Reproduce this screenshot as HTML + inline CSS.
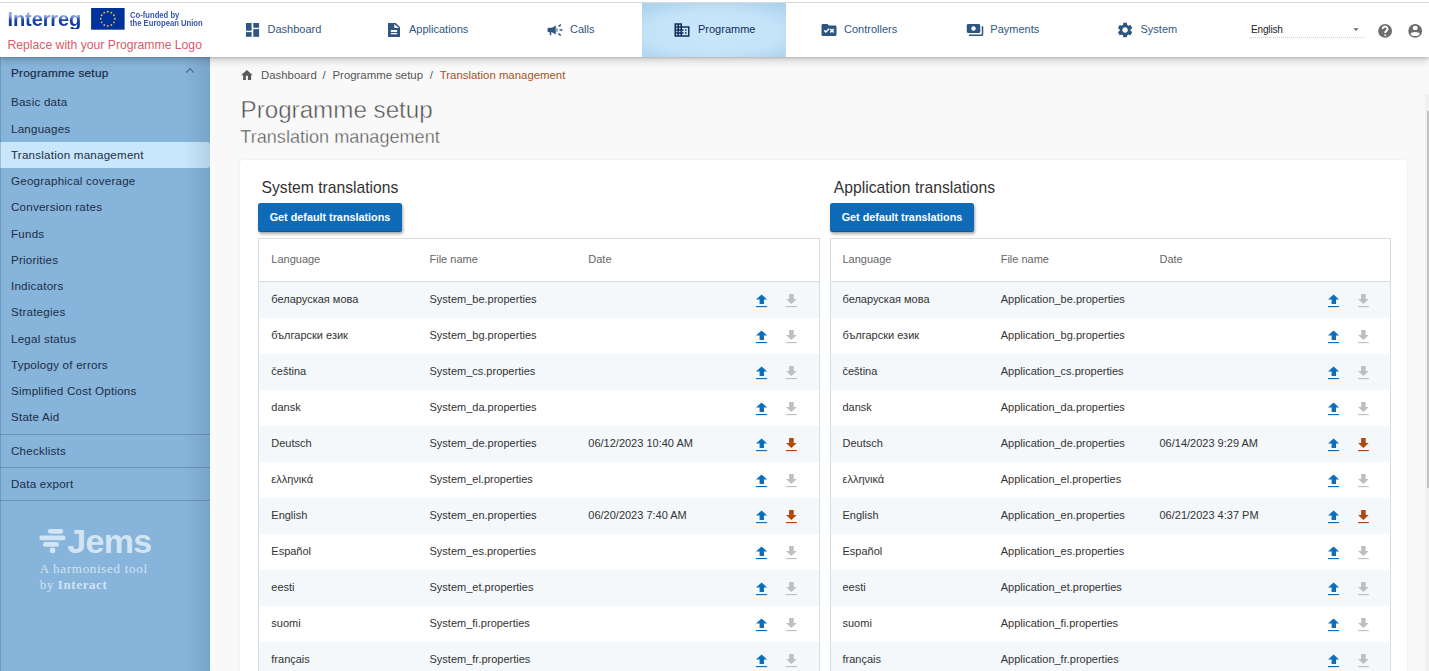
<!DOCTYPE html>
<html><head><meta charset="utf-8"><title>Jems - Translation management</title>
<style>
*{box-sizing:border-box;margin:0;padding:0}
html,body{width:1429px;height:671px;overflow:hidden;background:#f9f9f9;font-family:"Liberation Sans",sans-serif}
.a{position:absolute}
.t{position:absolute;line-height:1;white-space:nowrap}
#hdr{position:absolute;left:0;top:0;width:1429px;height:57px;background:#fff;z-index:5;box-shadow:0 3px 8px rgba(0,0,0,.2),0 1px 2px rgba(0,0,0,.15)}
.nav{color:#2f5680}
#side{position:absolute;left:0;top:0;width:210px;height:671px;background:#86b4da;z-index:2;overflow:hidden}
.s{color:#1e2d45}
#main{position:absolute;left:0;top:0;width:1429px;height:671px;z-index:1}
.bc{color:#555}
.ct{color:#333}
.btn{position:absolute;width:144px;height:28.6px;background:#0f6bb8;border-radius:2.5px;box-shadow:inset 0 -1px 0 rgba(0,0,0,.15),1px 2px 3px rgba(0,0,0,.35)}
.btnt{font-weight:bold;color:#fff}
.th{color:#666}
.td{color:#333}
</style></head><body>
<div id="hdr">
<div class="a" style="left:0;top:2px;width:1429px;height:1px;background:#d9dadc"></div>
<div class="t" style="left:7.50px;top:9px;font-size:20.00px;font-weight:bold;letter-spacing:-.1px;color:transparent;background:linear-gradient(to bottom,#a9b9e6 0px,#8da3dd 7px,#1d43a6 11px,#002f99 20px);-webkit-background-clip:text;background-clip:text">Interreg</div>
<svg class="a" style="left:91px;top:8px" width="34" height="22" viewBox="91 8 34 22" ><rect x="91.1" y="8" width="33.5" height="21.7" fill="#003399"/><g fill="#e3bb33"><circle cx="114.90" cy="18.80" r=".95"/><circle cx="113.95" cy="22.35" r=".95"/><circle cx="111.35" cy="24.95" r=".95"/><circle cx="107.80" cy="25.90" r=".95"/><circle cx="104.25" cy="24.95" r=".95"/><circle cx="101.65" cy="22.35" r=".95"/><circle cx="100.70" cy="18.80" r=".95"/><circle cx="101.65" cy="15.25" r=".95"/><circle cx="104.25" cy="12.65" r=".95"/><circle cx="107.80" cy="11.70" r=".95"/><circle cx="111.35" cy="12.65" r=".95"/><circle cx="113.95" cy="15.25" r=".95"/></g></svg>
<div class="t" style="left:129.60px;top:11px;font-size:8.80px;font-weight:bold;color:#3556a8;transform-origin:0 0;transform:scaleX(.87)">Co-funded by</div>
<div class="t" style="left:129.60px;top:19px;font-size:8.80px;font-weight:bold;color:#3556a8;transform-origin:0 0;transform:scaleX(.87)">the European Union</div>
<div class="t" style="left:7.50px;top:39px;font-size:12.20px;color:#dc5a6b">Replace with your Programme Logo</div>
<div class="a" style="left:642px;top:3px;width:144px;height:54px;background:radial-gradient(ellipse 80% 70% at 50% 55%,#c9e7fa 0%,#c4e3f8 55%,#a9d0ec 100%)"></div>
<svg class="a" style="left:244px;top:21px" width="18" height="18" viewBox="244 21 18 18" ><g fill="#2f5680"><rect x="246" y="23" width="5.6" height="7.7"/><rect x="253.3" y="23" width="5.8" height="4.75"/><rect x="246" y="32.1" width="5.6" height="4.7"/><rect x="253.3" y="29.1" width="5.8" height="7.7"/></g></svg>
<div class="t nav" style="left:267.50px;top:24px;font-size:11.00px;">Dashboard</div>
<svg class="a" style="left:386px;top:21px" width="16" height="18" viewBox="386 21 16 18" ><path fill="#2f5680" fill-rule="evenodd" d="M388 23H395.8L400 27.2V37H388Z M394.3 23.9V28H398.9Z M390.9 30H397.1V31.9H390.9Z M390.9 33H397.1V34.3H390.9Z"/></svg>
<div class="t nav" style="left:409.00px;top:24px;font-size:11.00px;">Applications</div>
<svg class="a" style="left:546px;top:21px" width="18" height="18" viewBox="0 0 24 24" fill="#2f5680"><path d="M18 11v2h4v-2h-4zm-2 6.61c.96.71 2.21 1.65 3.2 2.39.4-.53.8-1.07 1.2-1.6-.99-.74-2.24-1.68-3.2-2.4-.4.54-.8 1.08-1.2 1.61zM20.4 5.6c-.4-.53-.8-1.07-1.2-1.6-.99.74-2.24 1.68-3.2 2.4.4.53.8 1.07 1.2 1.6.96-.72 2.21-1.65 3.2-2.4zM4 9c-1.1 0-2 .9-2 2v2c0 1.1.9 2 2 2h1v4h2v-4h1l5 3V6L8 9H4zm11.5 3c0-1.33-.58-2.53-1.5-3.35v6.69c.92-.81 1.5-2.01 1.5-3.34z"/></svg>
<div class="t nav" style="left:570.00px;top:24px;font-size:11.00px;">Calls</div>
<svg class="a" style="left:673.3px;top:21px" width="18" height="18" viewBox="0 0 24 24" fill="#0f2d5c"><path d="M12 7V3H2v18h20V7H12zM6 19H4v-2h2v2zm0-4H4v-2h2v2zm0-4H4V9h2v2zm0-4H4V5h2v2zm4 12H8v-2h2v2zm0-4H8v-2h2v2zm0-4H8V9h2v2zm0-4H8V5h2v2zm10 12h-8v-2h2v-2h-2v-2h2v-2h-2V9h8v10zm-2-8h-2v2h2v-2zm0 4h-2v2h2v-2z"/></svg>
<div class="t nav" style="left:698.00px;top:24px;font-size:11.00px;color:#0f2d5c">Programme</div>
<svg class="a" style="left:820px;top:21px" width="18" height="18" viewBox="0 0 24 24" fill="#2f5680"><path d="M20 6h-8l-2-2H4c-1.1 0-2 .9-2 2v12c0 1.1.9 2 2 2h16c1.1 0 2-.9 2-2V8c0-1.1-.9-2-2-2zM7.83 16L5 13.17l1.41-1.41 1.41 1.41 3.54-3.54 1.41 1.41L7.83 16zm9.58-3L19 14.59 17.59 16 16 14.41 14.41 16 13 14.59 14.59 13 13 11.41 14.41 10 16 11.59 17.59 10 19 11.41 17.41 13z"/></svg>
<div class="t nav" style="left:844.00px;top:24px;font-size:11.00px;">Controllers</div>
<svg class="a" style="left:966px;top:21px" width="18" height="18" viewBox="0 0 24 24" fill="#2f5680"><path d="M19 14V6c0-1.1-.9-2-2-2H3c-1.1 0-2 .9-2 2v8c0 1.1.9 2 2 2h14c1.1 0 2-.9 2-2zm-9-1c-1.66 0-3-1.34-3-3s1.34-3 3-3 3 1.34 3 3-1.34 3-3 3zm13-6v11c0 1.1-.9 2-2 2H4v-2h17V7h2z"/></svg>
<div class="t nav" style="left:990.30px;top:24px;font-size:11.00px;">Payments</div>
<svg class="a" style="left:1115.5px;top:20.9px" width="18.2" height="18.2" viewBox="0 0 24 24" fill="#2f5680"><path d="M19.14 12.94c.04-.3.06-.61.06-.94 0-.32-.02-.64-.07-.94l2.03-1.58c.18-.14.23-.41.12-.61l-1.92-3.32c-.12-.22-.37-.29-.59-.22l-2.39.96c-.5-.38-1.03-.7-1.62-.94l-.36-2.54c-.04-.24-.24-.41-.48-.41h-3.84c-.24 0-.43.17-.47.41l-.36 2.54c-.59.24-1.13.57-1.62.94l-2.39-.96c-.22-.08-.47 0-.59.22L2.74 8.87c-.12.21-.08.47.12.61l2.03 1.58c-.05.3-.09.63-.09.94s.02.64.07.94l-2.03 1.58c-.18.14-.23.41-.12.61l1.92 3.32c.12.22.37.29.59.22l2.39-.96c.5.38 1.03.7 1.62.94l.36 2.54c.05.24.24.41.48.41h3.84c.24 0 .44-.17.47-.41l.36-2.54c.59-.24 1.13-.56 1.62-.94l2.39.96c.22.08.47 0 .59-.22l1.92-3.32c.12-.22.07-.47-.12-.61l-2.01-1.58zM12 15.6c-1.98 0-3.6-1.62-3.6-3.6s1.62-3.6 3.6-3.6 3.6 1.62 3.6 3.6-1.62 3.6-3.6 3.6z"/></svg>
<div class="t nav" style="left:1140.50px;top:24px;font-size:11.00px;">System</div>
<div class="t" style="left:1251.00px;top:25px;font-size:10.00px;color:#222;letter-spacing:-.15px">English</div>
<svg class="a" style="left:1352px;top:27px" width="8" height="5" viewBox="1352 27 8 5" ><path d="M1353.2 28.2h5.6l-2.8 2.8z" fill="#6b6b6b"/></svg>
<div class="a" style="left:1249.5px;top:37px;width:114px;height:1px;border-top:1px dotted #cfcfcf"></div>
<svg class="a" style="left:1376px;top:22px" width="18" height="18" viewBox="1376 22 18 18" ><circle cx="1385.1" cy="30.9" r="6.9" fill="#6e6e6e"/><path d="M1382.7 29.0a2.4 2.4 0 1 1 3.7 1.9c-.8.5-1.2.9-1.2 1.9v.3" fill="none" stroke="#fff" stroke-width="1.9"/><rect x="1384.3" y="34.5" width="1.8" height="1.4" fill="#fff"/></svg>
<svg class="a" style="left:1406px;top:22px" width="18" height="18" viewBox="1406 22 18 18" ><circle cx="1415.2" cy="30.9" r="6.9" fill="#6e6e6e"/><ellipse cx="1415.2" cy="27.9" rx="2.5" ry="2.2" fill="#fff"/><path d="M1410.6 34.2c0-1.4 2-2.3 4.6-2.3s4.6.9 4.6 2.3c-1.1 1.2-2.7 1.9-4.6 1.9s-3.5-.7-4.6-1.9z" fill="#fff"/></svg>
</div>
<div id="side">
<div class="a" style="left:0;top:142px;width:210px;height:26px;background:#c9e7fa;border-radius:0 3px 3px 0"></div>
<div class="t s" style="left:11.00px;top:68px;font-size:11.80px;color:#1b2a44;-webkit-text-stroke:.2px #1b2a44;letter-spacing:.25px">Programme setup</div>
<svg class="a" style="left:184px;top:66px" width="12" height="9" viewBox="184 66 12 9" ><path d="M186.2 72.6L190 68.6 193.8 72.6" fill="none" stroke="#4d6680" stroke-width="1.1"/></svg>
<div class="t s" style="left:11.00px;top:96px;font-size:11.60px;letter-spacing:.22px">Basic data</div>
<div class="t s" style="left:11.00px;top:123px;font-size:11.60px;letter-spacing:.22px">Languages</div>
<div class="t s" style="left:11.00px;top:149px;font-size:11.60px;letter-spacing:.22px">Translation management</div>
<div class="t s" style="left:11.00px;top:175px;font-size:11.60px;letter-spacing:.22px">Geographical coverage</div>
<div class="t s" style="left:11.00px;top:201px;font-size:11.60px;letter-spacing:.22px">Conversion rates</div>
<div class="t s" style="left:11.00px;top:228px;font-size:11.60px;letter-spacing:.22px">Funds</div>
<div class="t s" style="left:11.00px;top:254px;font-size:11.60px;letter-spacing:.22px">Priorities</div>
<div class="t s" style="left:11.00px;top:280px;font-size:11.60px;letter-spacing:.22px">Indicators</div>
<div class="t s" style="left:11.00px;top:306px;font-size:11.60px;letter-spacing:.22px">Strategies</div>
<div class="t s" style="left:11.00px;top:333px;font-size:11.60px;letter-spacing:.22px">Legal status</div>
<div class="t s" style="left:11.00px;top:359px;font-size:11.60px;letter-spacing:.22px">Typology of errors</div>
<div class="t s" style="left:11.00px;top:385px;font-size:11.60px;letter-spacing:.22px">Simplified Cost Options</div>
<div class="t s" style="left:11.00px;top:411px;font-size:11.60px;letter-spacing:.22px">State Aid</div>
<div class="a" style="left:0;top:434px;width:210px;height:1px;background:#6b93b7"></div>
<div class="a" style="left:0;top:467px;width:210px;height:1px;background:#6b93b7"></div>
<div class="a" style="left:0;top:500px;width:210px;height:1px;background:#6b93b7"></div>
<div class="t s" style="left:11.00px;top:445px;font-size:11.60px;letter-spacing:.22px">Checklists</div>
<div class="t s" style="left:11.00px;top:478px;font-size:11.60px;letter-spacing:.22px">Data export</div>
<svg class="a" style="left:38px;top:528px" width="30" height="27" viewBox="38 528 30 27" ><g fill="#d3e4f3"><rect x="47.9" y="529" width="15.3" height="4.7" rx="2.35"/><rect x="39.3" y="535.5" width="26.2" height="4.8" rx="2.4"/><rect x="42.9" y="542" width="16.1" height="4.8" rx="2.4"/><circle cx="52.5" cy="550.4" r="2.8"/></g></svg>
<div class="t" style="left:67.30px;top:524px;font-size:34.00px;font-weight:bold;color:#d3e4f3;letter-spacing:-.7px">Jems</div>
<div class="t" style="left:39.80px;top:562px;font-size:13.00px;font-family:'Liberation Serif',serif;color:#d3e4f3;letter-spacing:.7px">A harmonised tool</div>
<div class="t" style="left:39.80px;top:578px;font-size:13.00px;font-family:'Liberation Serif',serif;color:#d3e4f3;letter-spacing:.6px">by <b>Interact</b></div>
<div class="a" style="left:0;top:0;width:1px;height:671px;background:rgba(40,70,100,.25)"></div>
<div class="a" style="right:0;top:0;width:26px;height:671px;background:linear-gradient(to right,rgba(20,50,80,0),rgba(20,50,80,.12))"></div>
</div>
<div id="main">
<svg class="a" style="left:239px;top:68px" width="16" height="14" viewBox="239 68 16 14" ><path d="M246.9 70L241.1 75.3H243.1V80H245.9V75.7H247.9V80H251.1V75.3H252.7Z" fill="#5a5a5a"/></svg>
<div class="t bc" style="left:261.00px;top:70px;font-size:11.40px;">Dashboard</div>
<div class="t bc" style="left:322.50px;top:70px;font-size:11.40px;">/</div>
<div class="t bc" style="left:332.50px;top:70px;font-size:11.40px;">Programme setup</div>
<div class="t bc" style="left:429.80px;top:70px;font-size:11.40px;">/</div>
<div class="t bc" style="left:439.80px;top:70px;font-size:11.40px;color:#a3541f">Translation management</div>
<div class="t" style="left:240.50px;top:98px;font-size:24.20px;color:#4d4d4d;-webkit-text-stroke:.5px #f9f9f9">Programme setup</div>
<div class="t" style="left:240.30px;top:128px;font-size:18.10px;color:#4d4d4d;-webkit-text-stroke:.4px #f9f9f9">Translation management</div>
<div class="a" style="left:240px;top:160px;width:1167px;height:600px;background:#fff;border-radius:3px;box-shadow:0 0 2px rgba(0,0,0,.08)"></div>
<div class="t ct" style="left:261.50px;top:180px;font-size:15.70px;">System translations</div>
<div class="t ct" style="left:833.80px;top:180px;font-size:15.70px;">Application translations</div>
<div class="btn" style="left:258px;top:203px"></div>
<div class="t btnt" style="left:269.70px;top:212px;font-size:10.80px;">Get default translations</div>
<div class="btn" style="left:830px;top:203px"></div>
<div class="t btnt" style="left:841.70px;top:212px;font-size:10.80px;">Get default translations</div>
<div class="a" style="left:258px;top:238px;width:562px;height:462px;border:1px solid #d5dce2;background:#fff"></div>
<div class="a" style="left:259px;top:281px;width:560px;height:1px;background:#d5dce2"></div>
<div class="a" style="left:259px;top:282px;width:560px;height:36px;background:#f4f8fb"></div>
<div class="a" style="left:259px;top:354px;width:560px;height:36px;background:#f4f8fb"></div>
<div class="a" style="left:259px;top:426px;width:560px;height:36px;background:#f4f8fb"></div>
<div class="a" style="left:259px;top:498px;width:560px;height:36px;background:#f4f8fb"></div>
<div class="a" style="left:259px;top:570px;width:560px;height:36px;background:#f4f8fb"></div>
<div class="a" style="left:259px;top:642px;width:560px;height:36px;background:#f4f8fb"></div>
<div class="t th" style="left:271.30px;top:254px;font-size:11.00px;">Language</div>
<div class="t th" style="left:429.50px;top:254px;font-size:11.00px;">File name</div>
<div class="t th" style="left:588.30px;top:254px;font-size:11.00px;">Date</div>
<div class="t td" style="left:271.30px;top:294px;font-size:11.00px;">беларуская мова</div>
<div class="t td" style="left:429.50px;top:294px;font-size:11.00px;">System_be.properties</div>
<svg class="a" style="left:755px;top:293px" width="14" height="15" viewBox="755 293 14 15" ><path d="M761.60 294.40L756.00 299.60H759.60V304.00H764.00V299.60H767.10Z" fill="#0b6fbd"/><rect x="756.00" y="306.00" width="11.1" height="1.15" fill="#0b6fbd"/></svg>
<svg class="a" style="left:785px;top:293px" width="14" height="15" viewBox="785 293 14 15" ><path d="M789.10 294.00V299.10H786.00L791.40 304.00L796.80 299.10H793.70V294.00Z" fill="#bfbfbf"/><rect x="786.00" y="306.00" width="10.8" height="1.15" fill="#bfbfbf"/></svg>
<div class="t td" style="left:271.30px;top:330px;font-size:11.00px;">български език</div>
<div class="t td" style="left:429.50px;top:330px;font-size:11.00px;">System_bg.properties</div>
<svg class="a" style="left:755px;top:329px" width="14" height="15" viewBox="755 329 14 15" ><path d="M761.60 330.40L756.00 335.60H759.60V340.00H764.00V335.60H767.10Z" fill="#0b6fbd"/><rect x="756.00" y="342.00" width="11.1" height="1.15" fill="#0b6fbd"/></svg>
<svg class="a" style="left:785px;top:329px" width="14" height="15" viewBox="785 329 14 15" ><path d="M789.10 330.00V335.10H786.00L791.40 340.00L796.80 335.10H793.70V330.00Z" fill="#bfbfbf"/><rect x="786.00" y="342.00" width="10.8" height="1.15" fill="#bfbfbf"/></svg>
<div class="t td" style="left:271.30px;top:366px;font-size:11.00px;">čeština</div>
<div class="t td" style="left:429.50px;top:366px;font-size:11.00px;">System_cs.properties</div>
<svg class="a" style="left:755px;top:365px" width="14" height="15" viewBox="755 365 14 15" ><path d="M761.60 366.40L756.00 371.60H759.60V376.00H764.00V371.60H767.10Z" fill="#0b6fbd"/><rect x="756.00" y="378.00" width="11.1" height="1.15" fill="#0b6fbd"/></svg>
<svg class="a" style="left:785px;top:365px" width="14" height="15" viewBox="785 365 14 15" ><path d="M789.10 366.00V371.10H786.00L791.40 376.00L796.80 371.10H793.70V366.00Z" fill="#bfbfbf"/><rect x="786.00" y="378.00" width="10.8" height="1.15" fill="#bfbfbf"/></svg>
<div class="t td" style="left:271.30px;top:402px;font-size:11.00px;">dansk</div>
<div class="t td" style="left:429.50px;top:402px;font-size:11.00px;">System_da.properties</div>
<svg class="a" style="left:755px;top:401px" width="14" height="15" viewBox="755 401 14 15" ><path d="M761.60 402.40L756.00 407.60H759.60V412.00H764.00V407.60H767.10Z" fill="#0b6fbd"/><rect x="756.00" y="414.00" width="11.1" height="1.15" fill="#0b6fbd"/></svg>
<svg class="a" style="left:785px;top:401px" width="14" height="15" viewBox="785 401 14 15" ><path d="M789.10 402.00V407.10H786.00L791.40 412.00L796.80 407.10H793.70V402.00Z" fill="#bfbfbf"/><rect x="786.00" y="414.00" width="10.8" height="1.15" fill="#bfbfbf"/></svg>
<div class="t td" style="left:271.30px;top:438px;font-size:11.00px;">Deutsch</div>
<div class="t td" style="left:429.50px;top:438px;font-size:11.00px;">System_de.properties</div>
<div class="t td" style="left:588.30px;top:438px;font-size:11.00px;">06/12/2023 10:40 AM</div>
<svg class="a" style="left:755px;top:437px" width="14" height="15" viewBox="755 437 14 15" ><path d="M761.60 438.40L756.00 443.60H759.60V448.00H764.00V443.60H767.10Z" fill="#0b6fbd"/><rect x="756.00" y="450.00" width="11.1" height="1.15" fill="#0b6fbd"/></svg>
<svg class="a" style="left:785px;top:437px" width="14" height="15" viewBox="785 437 14 15" ><path d="M789.10 438.00V443.10H786.00L791.40 448.00L796.80 443.10H793.70V438.00Z" fill="#b4470d"/><rect x="786.00" y="450.00" width="10.8" height="1.15" fill="#b4470d"/></svg>
<div class="t td" style="left:271.30px;top:474px;font-size:11.00px;">ελληνικά</div>
<div class="t td" style="left:429.50px;top:474px;font-size:11.00px;">System_el.properties</div>
<svg class="a" style="left:755px;top:473px" width="14" height="15" viewBox="755 473 14 15" ><path d="M761.60 474.40L756.00 479.60H759.60V484.00H764.00V479.60H767.10Z" fill="#0b6fbd"/><rect x="756.00" y="486.00" width="11.1" height="1.15" fill="#0b6fbd"/></svg>
<svg class="a" style="left:785px;top:473px" width="14" height="15" viewBox="785 473 14 15" ><path d="M789.10 474.00V479.10H786.00L791.40 484.00L796.80 479.10H793.70V474.00Z" fill="#bfbfbf"/><rect x="786.00" y="486.00" width="10.8" height="1.15" fill="#bfbfbf"/></svg>
<div class="t td" style="left:271.30px;top:510px;font-size:11.00px;">English</div>
<div class="t td" style="left:429.50px;top:510px;font-size:11.00px;">System_en.properties</div>
<div class="t td" style="left:588.30px;top:510px;font-size:11.00px;">06/20/2023 7:40 AM</div>
<svg class="a" style="left:755px;top:509px" width="14" height="15" viewBox="755 509 14 15" ><path d="M761.60 510.40L756.00 515.60H759.60V520.00H764.00V515.60H767.10Z" fill="#0b6fbd"/><rect x="756.00" y="522.00" width="11.1" height="1.15" fill="#0b6fbd"/></svg>
<svg class="a" style="left:785px;top:509px" width="14" height="15" viewBox="785 509 14 15" ><path d="M789.10 510.00V515.10H786.00L791.40 520.00L796.80 515.10H793.70V510.00Z" fill="#b4470d"/><rect x="786.00" y="522.00" width="10.8" height="1.15" fill="#b4470d"/></svg>
<div class="t td" style="left:271.30px;top:546px;font-size:11.00px;">Español</div>
<div class="t td" style="left:429.50px;top:546px;font-size:11.00px;">System_es.properties</div>
<svg class="a" style="left:755px;top:545px" width="14" height="15" viewBox="755 545 14 15" ><path d="M761.60 546.40L756.00 551.60H759.60V556.00H764.00V551.60H767.10Z" fill="#0b6fbd"/><rect x="756.00" y="558.00" width="11.1" height="1.15" fill="#0b6fbd"/></svg>
<svg class="a" style="left:785px;top:545px" width="14" height="15" viewBox="785 545 14 15" ><path d="M789.10 546.00V551.10H786.00L791.40 556.00L796.80 551.10H793.70V546.00Z" fill="#bfbfbf"/><rect x="786.00" y="558.00" width="10.8" height="1.15" fill="#bfbfbf"/></svg>
<div class="t td" style="left:271.30px;top:582px;font-size:11.00px;">eesti</div>
<div class="t td" style="left:429.50px;top:582px;font-size:11.00px;">System_et.properties</div>
<svg class="a" style="left:755px;top:581px" width="14" height="15" viewBox="755 581 14 15" ><path d="M761.60 582.40L756.00 587.60H759.60V592.00H764.00V587.60H767.10Z" fill="#0b6fbd"/><rect x="756.00" y="594.00" width="11.1" height="1.15" fill="#0b6fbd"/></svg>
<svg class="a" style="left:785px;top:581px" width="14" height="15" viewBox="785 581 14 15" ><path d="M789.10 582.00V587.10H786.00L791.40 592.00L796.80 587.10H793.70V582.00Z" fill="#bfbfbf"/><rect x="786.00" y="594.00" width="10.8" height="1.15" fill="#bfbfbf"/></svg>
<div class="t td" style="left:271.30px;top:618px;font-size:11.00px;">suomi</div>
<div class="t td" style="left:429.50px;top:618px;font-size:11.00px;">System_fi.properties</div>
<svg class="a" style="left:755px;top:617px" width="14" height="15" viewBox="755 617 14 15" ><path d="M761.60 618.40L756.00 623.60H759.60V628.00H764.00V623.60H767.10Z" fill="#0b6fbd"/><rect x="756.00" y="630.00" width="11.1" height="1.15" fill="#0b6fbd"/></svg>
<svg class="a" style="left:785px;top:617px" width="14" height="15" viewBox="785 617 14 15" ><path d="M789.10 618.00V623.10H786.00L791.40 628.00L796.80 623.10H793.70V618.00Z" fill="#bfbfbf"/><rect x="786.00" y="630.00" width="10.8" height="1.15" fill="#bfbfbf"/></svg>
<div class="t td" style="left:271.30px;top:654px;font-size:11.00px;">français</div>
<div class="t td" style="left:429.50px;top:654px;font-size:11.00px;">System_fr.properties</div>
<svg class="a" style="left:755px;top:653px" width="14" height="15" viewBox="755 653 14 15" ><path d="M761.60 654.40L756.00 659.60H759.60V664.00H764.00V659.60H767.10Z" fill="#0b6fbd"/><rect x="756.00" y="666.00" width="11.1" height="1.15" fill="#0b6fbd"/></svg>
<svg class="a" style="left:785px;top:653px" width="14" height="15" viewBox="785 653 14 15" ><path d="M789.10 654.00V659.10H786.00L791.40 664.00L796.80 659.10H793.70V654.00Z" fill="#bfbfbf"/><rect x="786.00" y="666.00" width="10.8" height="1.15" fill="#bfbfbf"/></svg>
<div class="a" style="left:830px;top:238px;width:561px;height:462px;border:1px solid #d5dce2;background:#fff"></div>
<div class="a" style="left:831px;top:281px;width:559px;height:1px;background:#d5dce2"></div>
<div class="a" style="left:831px;top:282px;width:559px;height:36px;background:#f4f8fb"></div>
<div class="a" style="left:831px;top:354px;width:559px;height:36px;background:#f4f8fb"></div>
<div class="a" style="left:831px;top:426px;width:559px;height:36px;background:#f4f8fb"></div>
<div class="a" style="left:831px;top:498px;width:559px;height:36px;background:#f4f8fb"></div>
<div class="a" style="left:831px;top:570px;width:559px;height:36px;background:#f4f8fb"></div>
<div class="a" style="left:831px;top:642px;width:559px;height:36px;background:#f4f8fb"></div>
<div class="t th" style="left:842.50px;top:254px;font-size:11.00px;">Language</div>
<div class="t th" style="left:1000.70px;top:254px;font-size:11.00px;">File name</div>
<div class="t th" style="left:1159.50px;top:254px;font-size:11.00px;">Date</div>
<div class="t td" style="left:842.50px;top:294px;font-size:11.00px;">беларуская мова</div>
<div class="t td" style="left:1000.70px;top:294px;font-size:11.00px;">Application_be.properties</div>
<svg class="a" style="left:1326.6px;top:293px" width="14" height="15" viewBox="1326.6 293 14 15" ><path d="M1333.20 294.40L1327.60 299.60H1331.20V304.00H1335.60V299.60H1338.70Z" fill="#0b6fbd"/><rect x="1327.60" y="306.00" width="11.1" height="1.15" fill="#0b6fbd"/></svg>
<svg class="a" style="left:1356.6px;top:293px" width="14" height="15" viewBox="1356.6 293 14 15" ><path d="M1360.70 294.00V299.10H1357.60L1363.00 304.00L1368.40 299.10H1365.30V294.00Z" fill="#bfbfbf"/><rect x="1357.60" y="306.00" width="10.8" height="1.15" fill="#bfbfbf"/></svg>
<div class="t td" style="left:842.50px;top:330px;font-size:11.00px;">български език</div>
<div class="t td" style="left:1000.70px;top:330px;font-size:11.00px;">Application_bg.properties</div>
<svg class="a" style="left:1326.6px;top:329px" width="14" height="15" viewBox="1326.6 329 14 15" ><path d="M1333.20 330.40L1327.60 335.60H1331.20V340.00H1335.60V335.60H1338.70Z" fill="#0b6fbd"/><rect x="1327.60" y="342.00" width="11.1" height="1.15" fill="#0b6fbd"/></svg>
<svg class="a" style="left:1356.6px;top:329px" width="14" height="15" viewBox="1356.6 329 14 15" ><path d="M1360.70 330.00V335.10H1357.60L1363.00 340.00L1368.40 335.10H1365.30V330.00Z" fill="#bfbfbf"/><rect x="1357.60" y="342.00" width="10.8" height="1.15" fill="#bfbfbf"/></svg>
<div class="t td" style="left:842.50px;top:366px;font-size:11.00px;">čeština</div>
<div class="t td" style="left:1000.70px;top:366px;font-size:11.00px;">Application_cs.properties</div>
<svg class="a" style="left:1326.6px;top:365px" width="14" height="15" viewBox="1326.6 365 14 15" ><path d="M1333.20 366.40L1327.60 371.60H1331.20V376.00H1335.60V371.60H1338.70Z" fill="#0b6fbd"/><rect x="1327.60" y="378.00" width="11.1" height="1.15" fill="#0b6fbd"/></svg>
<svg class="a" style="left:1356.6px;top:365px" width="14" height="15" viewBox="1356.6 365 14 15" ><path d="M1360.70 366.00V371.10H1357.60L1363.00 376.00L1368.40 371.10H1365.30V366.00Z" fill="#bfbfbf"/><rect x="1357.60" y="378.00" width="10.8" height="1.15" fill="#bfbfbf"/></svg>
<div class="t td" style="left:842.50px;top:402px;font-size:11.00px;">dansk</div>
<div class="t td" style="left:1000.70px;top:402px;font-size:11.00px;">Application_da.properties</div>
<svg class="a" style="left:1326.6px;top:401px" width="14" height="15" viewBox="1326.6 401 14 15" ><path d="M1333.20 402.40L1327.60 407.60H1331.20V412.00H1335.60V407.60H1338.70Z" fill="#0b6fbd"/><rect x="1327.60" y="414.00" width="11.1" height="1.15" fill="#0b6fbd"/></svg>
<svg class="a" style="left:1356.6px;top:401px" width="14" height="15" viewBox="1356.6 401 14 15" ><path d="M1360.70 402.00V407.10H1357.60L1363.00 412.00L1368.40 407.10H1365.30V402.00Z" fill="#bfbfbf"/><rect x="1357.60" y="414.00" width="10.8" height="1.15" fill="#bfbfbf"/></svg>
<div class="t td" style="left:842.50px;top:438px;font-size:11.00px;">Deutsch</div>
<div class="t td" style="left:1000.70px;top:438px;font-size:11.00px;">Application_de.properties</div>
<div class="t td" style="left:1159.50px;top:438px;font-size:11.00px;">06/14/2023 9:29 AM</div>
<svg class="a" style="left:1326.6px;top:437px" width="14" height="15" viewBox="1326.6 437 14 15" ><path d="M1333.20 438.40L1327.60 443.60H1331.20V448.00H1335.60V443.60H1338.70Z" fill="#0b6fbd"/><rect x="1327.60" y="450.00" width="11.1" height="1.15" fill="#0b6fbd"/></svg>
<svg class="a" style="left:1356.6px;top:437px" width="14" height="15" viewBox="1356.6 437 14 15" ><path d="M1360.70 438.00V443.10H1357.60L1363.00 448.00L1368.40 443.10H1365.30V438.00Z" fill="#b4470d"/><rect x="1357.60" y="450.00" width="10.8" height="1.15" fill="#b4470d"/></svg>
<div class="t td" style="left:842.50px;top:474px;font-size:11.00px;">ελληνικά</div>
<div class="t td" style="left:1000.70px;top:474px;font-size:11.00px;">Application_el.properties</div>
<svg class="a" style="left:1326.6px;top:473px" width="14" height="15" viewBox="1326.6 473 14 15" ><path d="M1333.20 474.40L1327.60 479.60H1331.20V484.00H1335.60V479.60H1338.70Z" fill="#0b6fbd"/><rect x="1327.60" y="486.00" width="11.1" height="1.15" fill="#0b6fbd"/></svg>
<svg class="a" style="left:1356.6px;top:473px" width="14" height="15" viewBox="1356.6 473 14 15" ><path d="M1360.70 474.00V479.10H1357.60L1363.00 484.00L1368.40 479.10H1365.30V474.00Z" fill="#bfbfbf"/><rect x="1357.60" y="486.00" width="10.8" height="1.15" fill="#bfbfbf"/></svg>
<div class="t td" style="left:842.50px;top:510px;font-size:11.00px;">English</div>
<div class="t td" style="left:1000.70px;top:510px;font-size:11.00px;">Application_en.properties</div>
<div class="t td" style="left:1159.50px;top:510px;font-size:11.00px;">06/21/2023 4:37 PM</div>
<svg class="a" style="left:1326.6px;top:509px" width="14" height="15" viewBox="1326.6 509 14 15" ><path d="M1333.20 510.40L1327.60 515.60H1331.20V520.00H1335.60V515.60H1338.70Z" fill="#0b6fbd"/><rect x="1327.60" y="522.00" width="11.1" height="1.15" fill="#0b6fbd"/></svg>
<svg class="a" style="left:1356.6px;top:509px" width="14" height="15" viewBox="1356.6 509 14 15" ><path d="M1360.70 510.00V515.10H1357.60L1363.00 520.00L1368.40 515.10H1365.30V510.00Z" fill="#b4470d"/><rect x="1357.60" y="522.00" width="10.8" height="1.15" fill="#b4470d"/></svg>
<div class="t td" style="left:842.50px;top:546px;font-size:11.00px;">Español</div>
<div class="t td" style="left:1000.70px;top:546px;font-size:11.00px;">Application_es.properties</div>
<svg class="a" style="left:1326.6px;top:545px" width="14" height="15" viewBox="1326.6 545 14 15" ><path d="M1333.20 546.40L1327.60 551.60H1331.20V556.00H1335.60V551.60H1338.70Z" fill="#0b6fbd"/><rect x="1327.60" y="558.00" width="11.1" height="1.15" fill="#0b6fbd"/></svg>
<svg class="a" style="left:1356.6px;top:545px" width="14" height="15" viewBox="1356.6 545 14 15" ><path d="M1360.70 546.00V551.10H1357.60L1363.00 556.00L1368.40 551.10H1365.30V546.00Z" fill="#bfbfbf"/><rect x="1357.60" y="558.00" width="10.8" height="1.15" fill="#bfbfbf"/></svg>
<div class="t td" style="left:842.50px;top:582px;font-size:11.00px;">eesti</div>
<div class="t td" style="left:1000.70px;top:582px;font-size:11.00px;">Application_et.properties</div>
<svg class="a" style="left:1326.6px;top:581px" width="14" height="15" viewBox="1326.6 581 14 15" ><path d="M1333.20 582.40L1327.60 587.60H1331.20V592.00H1335.60V587.60H1338.70Z" fill="#0b6fbd"/><rect x="1327.60" y="594.00" width="11.1" height="1.15" fill="#0b6fbd"/></svg>
<svg class="a" style="left:1356.6px;top:581px" width="14" height="15" viewBox="1356.6 581 14 15" ><path d="M1360.70 582.00V587.10H1357.60L1363.00 592.00L1368.40 587.10H1365.30V582.00Z" fill="#bfbfbf"/><rect x="1357.60" y="594.00" width="10.8" height="1.15" fill="#bfbfbf"/></svg>
<div class="t td" style="left:842.50px;top:618px;font-size:11.00px;">suomi</div>
<div class="t td" style="left:1000.70px;top:618px;font-size:11.00px;">Application_fi.properties</div>
<svg class="a" style="left:1326.6px;top:617px" width="14" height="15" viewBox="1326.6 617 14 15" ><path d="M1333.20 618.40L1327.60 623.60H1331.20V628.00H1335.60V623.60H1338.70Z" fill="#0b6fbd"/><rect x="1327.60" y="630.00" width="11.1" height="1.15" fill="#0b6fbd"/></svg>
<svg class="a" style="left:1356.6px;top:617px" width="14" height="15" viewBox="1356.6 617 14 15" ><path d="M1360.70 618.00V623.10H1357.60L1363.00 628.00L1368.40 623.10H1365.30V618.00Z" fill="#bfbfbf"/><rect x="1357.60" y="630.00" width="10.8" height="1.15" fill="#bfbfbf"/></svg>
<div class="t td" style="left:842.50px;top:654px;font-size:11.00px;">français</div>
<div class="t td" style="left:1000.70px;top:654px;font-size:11.00px;">Application_fr.properties</div>
<svg class="a" style="left:1326.6px;top:653px" width="14" height="15" viewBox="1326.6 653 14 15" ><path d="M1333.20 654.40L1327.60 659.60H1331.20V664.00H1335.60V659.60H1338.70Z" fill="#0b6fbd"/><rect x="1327.60" y="666.00" width="11.1" height="1.15" fill="#0b6fbd"/></svg>
<svg class="a" style="left:1356.6px;top:653px" width="14" height="15" viewBox="1356.6 653 14 15" ><path d="M1360.70 654.00V659.10H1357.60L1363.00 664.00L1368.40 659.10H1365.30V654.00Z" fill="#bfbfbf"/><rect x="1357.60" y="666.00" width="10.8" height="1.15" fill="#bfbfbf"/></svg>
<div class="a" style="left:1425px;top:94px;width:4px;height:577px;background:#f1f1f1"></div>
<div class="a" style="left:1427px;top:111px;width:2px;height:377px;background:#c1c1c1"></div>
</div>
</body></html>
